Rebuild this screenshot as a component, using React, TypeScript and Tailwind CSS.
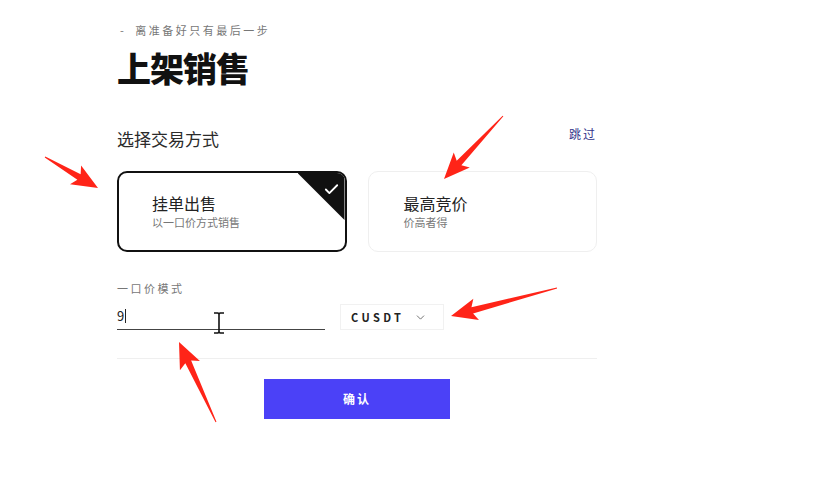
import { ChevronDown, Check } from 'lucide-react'

type Arrow = { from: [number, number]; to: [number, number] }

const arrows: Arrow[] = [
  { from: [45, 157], to: [98, 188] },
  { from: [503, 116], to: [444, 179] },
  { from: [557, 288], to: [451, 316] },
  { from: [216, 422], to: [179, 342] }
]

// tapered red arrow, head at "to"
const arrowPoints = ({ from, to }: Arrow) => {
  const dx = to[0] - from[0]
  const dy = to[1] - from[1]
  const len = Math.hypot(dx, dy)
  const ux = dx / len
  const uy = dy / len
  const nx = -uy
  const ny = ux
  const head = 26
  const headW = 11
  const shaftW = 3.2
  const bx = to[0] - ux * head
  const by = to[1] - uy * head
  const pts = [
    [from[0] + nx * 0.5, from[1] + ny * 0.5],
    [bx + ux * 4 + nx * shaftW, by + uy * 4 + ny * shaftW],
    [bx + nx * headW, by + ny * headW],
    [to[0], to[1]],
    [bx - nx * headW, by - ny * headW],
    [bx + ux * 4 - nx * shaftW, by + uy * 4 - ny * shaftW],
    [from[0] - nx * 0.5, from[1] - ny * 0.5]
  ]
  return pts.map((p) => p.join(',')).join(' ')
}

const cjk = "font-['Noto_Sans_CJK_SC','Noto_Sans',sans-serif]"

const App = () => {
  return (
    <div className={`relative h-[480px] w-[823px] overflow-hidden bg-white ${cjk}`}>
      <div className="ml-[117px] w-[480px] pt-[21px]">
        {/* header */}
        <p className="text-[11px] leading-[18px] tracking-[2.5px] text-[#777]">
          <span className="mr-[9px] ml-[3px]">-</span>离准备好只有最后一步
        </p>
        <h1 className="mt-[9px] text-[34px] leading-[40px] font-black tracking-[-1px] text-[#111]">上架销售</h1>

        {/* trade type */}
        <div className="mt-[37px] flex items-center justify-between">
          <p className="text-[17px] leading-[24px] text-[#2b2b2b]">选择交易方式</p>
          <button className="mb-[9px] text-[12px] tracking-[2px] text-[#33338a]">跳过</button>
        </div>

        <div className="mt-[19px] grid grid-cols-2 gap-[21px]">
          <div className="relative flex h-[81px] items-center overflow-hidden rounded-[10px] border-2 border-[#111] bg-white pl-[33px]">
            <div>
              <p className="text-[16px] leading-[20px] text-[#222]">挂单出售</p>
              <p className="mt-[1px] text-[11px] leading-[16px] text-[#777]">以一口价方式销售</p>
            </div>
            <div className="absolute top-0 right-0 h-[47px] w-[47px] bg-[#111] [clip-path:polygon(0_0,100%_0,100%_100%)]" />
            <Check className="absolute top-[8px] right-[5px] h-[17px] w-[17px] text-white" strokeWidth={2.6} />
          </div>
          <div className="flex h-[81px] items-center rounded-[10px] border border-[#efefef] bg-white pl-[35px]">
            <div>
              <p className="text-[16px] leading-[20px] text-[#222]">最高竞价</p>
              <p className="mt-[1px] text-[11px] leading-[16px] text-[#777]">价高者得</p>
            </div>
          </div>
        </div>

        {/* price */}
        <p className="mt-[28px] text-[11px] leading-[16px] tracking-[2.5px] text-[#777]">一口价模式</p>
        <div className="mt-[7px] flex items-end gap-[15px]">
          <div className="relative flex h-[27px] w-[208px] items-center border-b border-[#444]">
            <span className="text-[13px] leading-[18px] text-[#222]">9</span>
            <span className="ml-[1px] h-[14px] w-[1px] bg-[#222]" />
            {/* I-beam mouse cursor */}
            <svg className="absolute top-[9px] left-[96px]" width="12" height="22" viewBox="0 0 12 22">
              <path d="M1 1h4l1 1 1-1h4M6 2v18M1 21h4l1-1 1 1h4" stroke="#111" strokeWidth="1.6" fill="none" />
            </svg>
          </div>
          <button className="flex h-[26px] w-[104px] items-center border border-[#f1f1f1] pl-[10px] text-[11px] font-bold tracking-[3.4px] text-[#222]">
            CUSDT
            <ChevronDown className="ml-[10px] h-[13px] w-[13px] text-[#555]" strokeWidth={1.5} />
          </button>
        </div>

        <div className="mt-[28px] h-px w-full bg-[#efefef]" />

        <div className="mt-[20px] flex justify-center">
          <button className="h-[40px] w-[186px] bg-[#4b41f7] text-[12px] font-bold tracking-[2px] text-white">确认</button>
        </div>
      </div>

      {/* red annotation arrows */}
      <svg className="pointer-events-none absolute inset-0" width="823" height="480">
        {arrows.map((a, i) => (
          <polygon key={i} points={arrowPoints(a)} fill="#ff2418" />
        ))}
      </svg>
    </div>
  )
}

export default App
